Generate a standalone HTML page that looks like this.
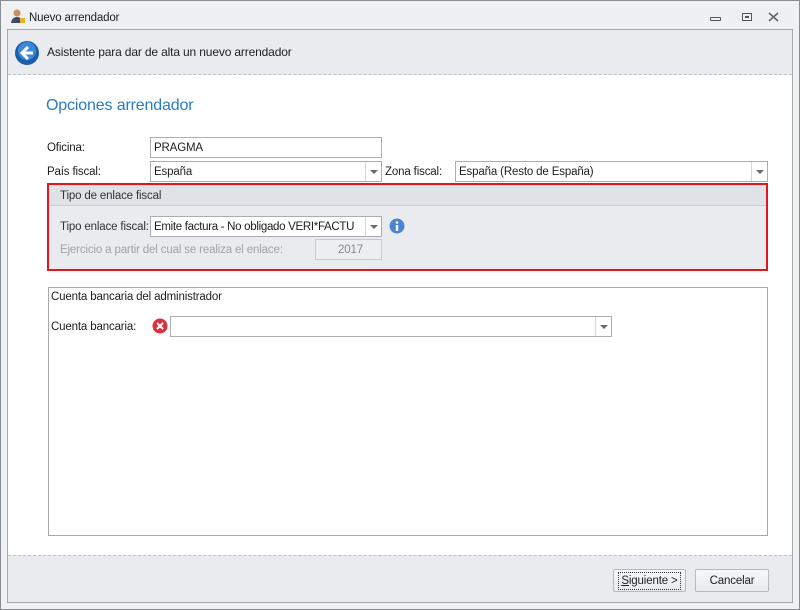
<!DOCTYPE html>
<html><head><meta charset="utf-8"><style>
*{box-sizing:border-box;margin:0;padding:0}
body{width:800px;height:610px;background:#eef0f2;font-family:"Liberation Sans",sans-serif;font-size:11.5px;letter-spacing:-0.15px;color:#1e1e1e;position:relative;overflow:hidden}
.abs{position:absolute}
.win{left:0;top:0;width:800px;height:610px;border:1px solid #8a8d91;background:#eef0f2}
.frame{left:7px;top:29px;width:786px;height:574px;border:1px solid #a5a8ac;background:#fff}
.hdr{left:8px;top:30px;width:784px;height:45px;background:#e9ebee;border-bottom:1px dashed #bfc2c6}
.ftr{left:8px;top:555px;width:784px;height:47px;background:#e9ebee;border-top:1px dashed #bfc2c6}
.inp{background:#fff;border:1px solid #abadb3;height:21px;padding:4px 0 0 3px;white-space:nowrap;overflow:hidden}
.dd{position:absolute;right:0;top:0;width:16px;height:19px;border-left:1px solid #d5d7da;background:#fff}
.dd:after{content:"";position:absolute;left:4px;top:8px;border:4px solid transparent;border-top:4px solid #6a6a6a}
.btn{border:1px solid #b6b9bd;border-radius:2px;background:linear-gradient(#f6f7f8,#e8eaec);height:23px;text-align:center;padding-top:5px}
</style></head><body>
<div class="abs win"></div>
<svg class="abs" style="left:10px;top:8px" width="16" height="16"><circle cx="7" cy="5" r="3.5" fill="#c88d62"/><path d="M1 15 Q2 9 7 9 Q12 9 13 15Z" fill="#3b4a66"/><rect x="10" y="10" width="5" height="5" fill="#e6b32c"/></svg>
<div class="abs" style="left:29px;top:12px">Nuevo arrendador</div>
<div class="abs" style="left:710px;top:17px;width:11px;height:4px;border:1px solid #555;border-radius:1px"></div>
<div class="abs" style="left:742px;top:13px;width:10px;height:8px;border:1px solid #555"><div style="margin:2px 0 0 2px;width:4px;height:2px;border:1px solid #555"></div></div>
<svg class="abs" style="left:768px;top:12px" width="11" height="10"><path d="M1 1 L10 9 M10 1 L1 9" stroke="#666" stroke-width="1.6"/></svg>
<div class="abs frame"></div>
<div class="abs hdr"></div>
<svg class="abs" style="left:14px;top:40px" width="26" height="26"><circle cx="13" cy="13" r="12" fill="#1d5ea8"/><circle cx="13" cy="11" r="9" fill="#3b8ad6"/><path d="M14 7 L8 13 L14 19 M8 13 H19" stroke="#fff" stroke-width="3" fill="none"/></svg>
<div class="abs" style="left:47px;top:45px;font-size:12px">Asistente para dar de alta un nuevo arrendador</div>
<div class="abs" style="left:46px;top:97px;font-size:16px;color:#2a7cc4">Opciones arrendador</div>
<div class="abs" style="left:47px;top:142px">Oficina:</div>
<div class="abs inp" style="left:150px;top:137px;width:232px">PRAGMA</div>
<div class="abs" style="left:47px;top:166px">País fiscal:</div>
<div class="abs inp" style="left:150px;top:161px;width:232px">España<div class="dd"></div></div>
<div class="abs" style="left:385px;top:166px">Zona fiscal:</div>
<div class="abs inp" style="left:455px;top:161px;width:313px">España (Resto de España)<div class="dd"></div></div>
<div class="abs" style="left:47px;top:183px;width:721px;height:88px;border:2px solid #e8141b;background:#e9ebee"></div>
<div class="abs" style="left:49px;top:185px;width:717px;height:21px;background:#dfe2e6;border-bottom:1px solid #ccd0d4"></div>
<div class="abs" style="left:60px;top:190px;color:#333">Tipo de enlace fiscal</div>
<div class="abs" style="left:60px;top:221px;color:#333">Tipo enlace fiscal:</div>
<div class="abs inp" style="left:150px;top:216px;width:232px;letter-spacing:-0.3px">Emite factura - No obligado VERI*FACTU<div class="dd"></div></div>
<svg class="abs" style="left:389px;top:218px" width="16" height="16"><circle cx="8" cy="8" r="7.5" fill="#4a86d0"/><circle cx="8" cy="4.5" r="1.3" fill="#fff"/><rect x="6.8" y="7" width="2.4" height="6" fill="#fff"/></svg>
<div class="abs" style="left:60px;top:244px;color:#a0a3a7">Ejercicio a partir del cual se realiza el enlace:</div>
<div class="abs inp" style="left:315px;top:239px;width:67px;background:#eceef0;border-color:#c8cacd;color:#888;text-align:right;padding-right:18px">2017</div>
<div class="abs" style="left:48px;top:287px;width:720px;height:249px;border:1px solid #a5a8ac"></div>
<div class="abs" style="left:51px;top:291px">Cuenta bancaria del administrador</div>
<div class="abs" style="left:51px;top:321px">Cuenta bancaria:</div>
<svg class="abs" style="left:152px;top:318px" width="16" height="16"><circle cx="8" cy="8" r="7.5" fill="#d9323e"/><path d="M5 5 L11 11 M11 5 L5 11" stroke="#fff" stroke-width="2"/></svg>
<div class="abs inp" style="left:170px;top:316px;width:442px"><div class="dd"></div></div>
<div class="abs ftr"></div>
<div class="abs btn" style="left:613px;top:569px;width:73px"><span style="outline:1px dotted #333;outline-offset:2px"><u>S</u>iguiente &gt;</span></div>
<div class="abs btn" style="left:695px;top:569px;width:74px">Cancelar</div>
</body></html>
